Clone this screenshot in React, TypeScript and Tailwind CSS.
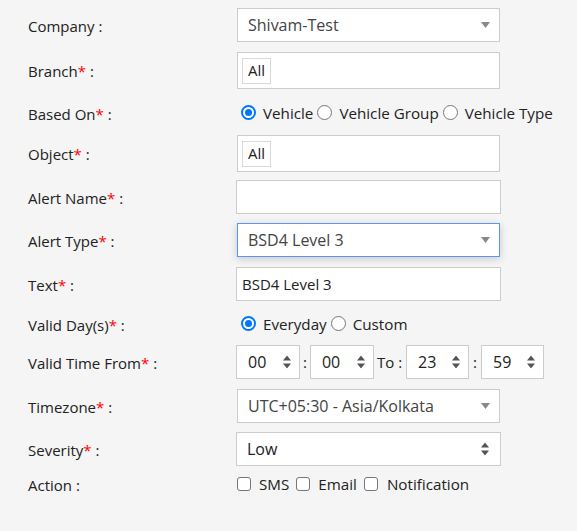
import React from "react";

const Req = () => <span className="text-[#ff0000]">*</span>;

function Label({ text, req = true }: { text: string; req?: boolean }) {
  return (
    <div className="w-[208px] shrink-0 pt-[2px] text-[15px] text-[#222]">
      {text}
      {req && <Req />} :
    </div>
  );
}

const DownArrow = () => (
  <svg width="9" height="6" viewBox="0 0 9 6" className="absolute right-[9px] top-1/2 -translate-y-1/2">
    <path d="M0 0 L9 0 L4.5 6 Z" fill="#888" />
  </svg>
);

const UpDown = ({ right = "right-[11px]" }: { right?: string }) => (
  <svg width="8" height="13" viewBox="0 0 8 13" className={`absolute ${right} top-1/2 -translate-y-1/2`}>
    <path d="M0 5 L8 5 L4 0 Z" fill="#555" />
    <path d="M0 8 L8 8 L4 13 Z" fill="#555" />
  </svg>
);

function Select2({ value, focus = false }: { value: string; focus?: boolean }) {
  return (
    <div
      className={`relative ml-[1px] flex h-full w-[263px] items-center bg-white pl-[10px] text-[16px] text-[#444] ${
        focus ? "border border-[#5b95ec] shadow-[0_2px_8px_rgba(0,0,0,0.18)]" : "border border-[#cccccc]"
      }`}
    >
      {value}
      <DownArrow />
    </div>
  );
}

function TagBox() {
  return (
    <div className="ml-[1px] flex h-full w-[263px] items-center border border-[#cccccc] bg-white pl-[4px]">
      <div className="flex h-[26px] items-center border border-[#d9d9d9] bg-white px-[5px] text-[15px] text-[#222]">
        All
      </div>
    </div>
  );
}

function Radio({ checked }: { checked?: boolean }) {
  return checked ? (
    <span className="flex h-[15px] w-[15px] shrink-0 items-center justify-center rounded-full border-[2px] border-[#0075ff] bg-white">
      <span className="h-[7px] w-[7px] rounded-full bg-[#0075ff]" />
    </span>
  ) : (
    <span className="h-[15px] w-[15px] shrink-0 rounded-full border border-[#767676] bg-white" />
  );
}

const Check = () => (
  <span className="h-[14px] w-[14px] shrink-0 rounded-[3px] border border-[#767676] bg-white" />
);

function TimeBox({ v, w = "w-[64px]" }: { v: string; w?: string }) {
  return (
    <div className={`relative flex h-full ${w} items-center border border-[#cccccc] bg-white pl-[11px] text-[16px] text-[#222]`}>
      {v}
      <UpDown right="right-[8px]" />
    </div>
  );
}

export default function App() {
  return (
    <div
      className="h-[531px] w-[577px] bg-[#f5f5f5] pl-[28px] pt-[8px]"
      style={{ fontFamily: '"Open Sans", "Noto Sans", sans-serif' }}
    >
      <div className="flex h-[34px] items-center">
        <Label text="Company" req={false} />
        <Select2 value="Shivam-Test" />
      </div>
      <div className="mt-[10px] flex h-[37px] items-center">
        <Label text="Branch" />
        <TagBox />
      </div>
      <div className="mt-[12px] flex h-[24px] items-center">
        <Label text="Based On" />
        <div className="ml-[5px] flex items-center text-[15.2px] text-[#222]">
          <Radio checked />
          <span className="ml-[7px] mr-[4px]">Vehicle</span>
          <Radio />
          <span className="ml-[7px] mr-[4px]">Vehicle Group</span>
          <Radio />
          <span className="ml-[7px]">Vehicle Type</span>
        </div>
      </div>
      <div className="mt-[10px] flex h-[37px] items-center">
        <Label text="Object" />
        <TagBox />
      </div>
      <div className="mt-[8px] flex h-[34px] items-center">
        <Label text="Alert Name" />
        <div className="h-full w-[265px] border border-[#cccccc] bg-white" />
      </div>
      <div className="mt-[9px] flex h-[34px] items-center">
        <Label text="Alert Type" />
        <Select2 value="BSD4 Level 3" focus />
      </div>
      <div className="mt-[10px] flex h-[34px] items-center">
        <Label text="Text" />
        <div className="flex h-full w-[265px] items-center border border-[#cccccc] bg-white pl-[5px] text-[15px] text-[#222]">
          BSD4 Level 3
        </div>
      </div>
      <div className="mt-[11px] flex h-[24px] items-center">
        <Label text="Valid Day(s)" />
        <div className="ml-[5px] flex items-center text-[15.2px] text-[#222]">
          <Radio checked />
          <span className="ml-[7px] mr-[4px]">Everyday</span>
          <Radio />
          <span className="ml-[7px]">Custom</span>
        </div>
      </div>
      <div className="mt-[9px] flex h-[34px] items-center">
        <Label text="Valid Time From" />
        <div className="flex h-full items-center text-[15px] text-[#222]">
          <TimeBox v="00" />
          <span className="mx-[3px]">:</span>
          <TimeBox v="00" />
          <span className="ml-[3px] mr-[4px]">To :</span>
          <TimeBox v="23" w="w-[63px]" />
          <span className="mx-[4px]">:</span>
          <TimeBox v="59" w="w-[63px]" />
        </div>
      </div>
      <div className="mt-[10px] flex h-[34px] items-center">
        <Label text="Timezone" />
        <Select2 value="UTC+05:30 - Asia/Kolkata" />
      </div>
      <div className="mt-[9px] flex h-[34px] items-center">
        <Label text="Severity" />
        <div className="relative flex h-full w-[265px] items-center border border-[#cccccc] bg-white pl-[10px] text-[16px] text-[#222]">
          Low
          <UpDown />
        </div>
      </div>
      <div className="mt-[6px] flex h-[24px] items-center">
        <Label text="Action" req={false} />
        <div className="ml-[1px] flex items-center text-[15.2px] text-[#222]">
          <Check />
          <span className="ml-[8px] mr-[7px]">SMS</span>
          <Check />
          <span className="ml-[8px] mr-[7px]">Email</span>
          <Check />
          <span className="ml-[9px]">Notification</span>
        </div>
      </div>
    </div>
  );
}
